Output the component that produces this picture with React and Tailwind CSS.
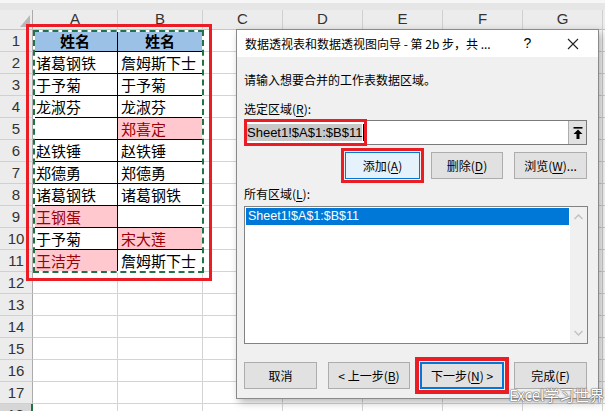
import React from 'react';

const cols = ['A', 'B', 'C', 'D', 'E', 'F', 'G', ''];
const colW = ['w-[85px]', 'w-[85px]', 'w-[80px]', 'w-[80px]', 'w-[80px]', 'w-[80px]', 'w-[80px]', 'w-[80px]'];

// [text, pink?]
const rows = [
  [['姓名'], ['姓名']],
  [['诸葛钢铁'], ['詹姆斯下士']],
  [['于予菊'], ['于予菊']],
  [['龙淑芬'], ['龙淑芬']],
  [[''], ['郑喜定', true]],
  [['赵铁锤'], ['赵铁锤']],
  [['郑德勇'], ['郑德勇']],
  [['诸葛钢铁'], ['诸葛钢铁']],
  [['王钢蛋', true], ['']],
  [['于予菊'], ['宋大莲', true]],
  [['王洁芳', true], ['詹姆斯下士']],
];

const cjk = "font-['Noto_Sans_CJK_SC',sans-serif]";
const ui = "font-['Microsoft_YaHei','Noto_Sans_CJK_SC',sans-serif]";

const U = ({ children }) => <span className="underline underline-offset-2">{children}</span>;

function SheetRow({ n, data }) {
  return (
    <div className="flex h-[22px] shrink-0">
      <div
        className={
          'w-[33px] shrink-0 flex items-center justify-center border-b border-r text-[15px] leading-none text-[#333] font-[\'Liberation_Sans\',sans-serif] ' +
          (n === 18 ? 'bg-[#d6d6d6] border-b-[#c6c6c6] border-r-2 border-r-[#217346]' : 'bg-[#ececec] border-b-[#d0d0d0] border-r-[#ababab]')
        }
      >
        {n}
      </div>
      {cols.map((c, i) => {
        const cell = data && i < 2 ? data[i] : null;
        if (!cell) {
          return <div key={i} className={colW[i] + ' shrink-0 border-r border-b border-[#d4d4d4]'} />;
        }
        const [text, pink] = cell;
        const head = n === 1;
        return (
          <div
            key={i}
            className={
              colW[i] +
              ' shrink-0 border-r border-b border-black flex items-center text-[15px] leading-none ' +
              cjk +
              (head ? ' bg-[#9bc2e6] justify-center font-bold text-black' : pink ? ' bg-[#ffc7ce] text-[#9c0006] pl-[3px]' : ' text-black pl-[3px]')
            }
          >
            {text}
          </div>
        );
      })}
    </div>
  );
}

function Btn({ w, children, kind }) {
  const base = 'h-[27px] shrink-0 flex items-center justify-center text-[12px] text-black ' + w;
  if (kind === 'focus') return <div className={base + ' bg-[#e5f1fb] border border-[#0078d7]'}>{children}</div>;
  if (kind === 'default') return <div className={base + ' bg-[#e1e1e1] border-2 border-[#0078d7]'}>{children}</div>;
  return <div className={base + ' bg-[#e1e1e1] border border-[#adadad]'}>{children}</div>;
}

export default function App() {
  return (
    <div className="relative w-[605px] h-[411px] overflow-hidden bg-white">
      {/* sheet */}
      <div className="flex flex-col">
        <div className="h-[10px] bg-[#e6e6e6] border-t-[3px] border-[#f6f6f6]" />
        <div className="flex h-[20px] bg-[#ececec] border-b border-[#c6c6c6]">
          <div className="w-[33px] shrink-0 border-r border-[#ababab] flex items-end justify-end pr-[2px] pb-[2px]">
            <svg width="10" height="12" viewBox="0 0 10 12">
              <polygon points="10,0 10,12 0,12" fill="#b8b8b8" />
            </svg>
          </div>
          {cols.map((c, i) => (
            <div
              key={i}
              className={colW[i] + " shrink-0 border-r border-[#d0d0d0] flex items-center justify-center text-[15px] text-[#333] font-['Liberation_Sans',sans-serif]"}
            >
              {c}
            </div>
          ))}
        </div>
        {Array.from({ length: 18 }, (_, k) => (
          <SheetRow key={k} n={k + 1} data={rows[k]} />
        ))}
      </div>

      {/* copy range marquee */}
      <div className="absolute left-[33px] top-[30px] w-[171px] h-[243px] border-2 border-white">
        <div className="absolute -inset-[2px] border-2 border-dashed border-[#217346]" />
      </div>
      {/* red highlight on range */}
      <div className="absolute left-[26px] top-[24px] w-[186px] h-[257px] border-[3px] border-[#ec1c24]" />

      {/* dialog */}
      <div className={'absolute left-[236px] top-[29px] w-[363px] h-[370px] border border-[#8a8a8a] bg-[#f0f0f0] shadow-[3px_3px_8px_rgba(0,0,0,0.3)] flex flex-col ' + ui}>
        <div className="h-[27px] shrink-0 bg-white flex items-center pl-[8px] text-[12px] text-black">
          <span className="whitespace-nowrap">数据透视表和数据透视图向导 - 第 2b 步，共 ...</span>
          <div className="ml-auto flex mr-[3px]">
            <div className="w-[45px] text-center text-[14px] font-['Liberation_Sans',sans-serif]">?</div>
            <div className="w-[45px] flex items-center justify-center">
              <svg width="12" height="12" viewBox="0 0 12 12">
                <path d="M1 1 L11 11 M11 1 L1 11" stroke="#222" strokeWidth="1.1" />
              </svg>
            </div>
          </div>
        </div>

        <div className="flex-1 flex flex-col pl-[7px] pr-[11px] pt-[14px] text-[12px] text-black">
          <div className="h-[17px] leading-[17px]">请输入想要合并的工作表数据区域。</div>
          <div className="h-[17px] leading-[17px] mt-[12px]">
            选定区域(<U>R</U>):
          </div>
          <div className="relative mt-[3px] h-[25px] bg-white border border-[#7a7a7a] flex items-center">
            <span className="ml-[2px] bg-[#c8c8c8] text-[13px] leading-[17px] font-['Liberation_Sans',sans-serif]">Sheet1!$A$1:$B$11</span>
            <span className="w-[1px] h-[17px] bg-black ml-[1px]" />
            <div className="ml-auto w-[18px] h-full bg-[#e1e1e1] border-l border-[#adadad] flex items-center justify-center">
              <svg width="10" height="12" viewBox="0 0 10 12">
                <rect x="0.5" y="0" width="9" height="1.6" fill="#000" />
                <polygon points="5,2.6 9.5,7 6.5,7 6.5,12 3.5,12 3.5,7 0.5,7" fill="#000" />
              </svg>
            </div>
            <div className="absolute -left-[1px] -top-[2px] w-[123px] h-[27px] border-[3px] border-[#ec1c24]" />
          </div>

          <div className="mt-[7px] flex justify-end gap-[11px]">
            <div className="relative">
              <Btn w="w-[75px]" kind="focus">
                添加(<U>A</U>)
              </Btn>
              <div className="absolute -inset-[4px] border-[3px] border-[#ec1c24]" />
            </div>
            <Btn w="w-[72px]">
              删除(<U>D</U>)
            </Btn>
            <Btn w="w-[73px]">
              浏览(<U>W</U>)...
            </Btn>
          </div>

          <div className="h-[17px] leading-[17px] mt-[6px]">
            所有区域(<U>L</U>):
          </div>
          <div className="mt-[4px] h-[138px] -mr-[1px] bg-white border border-[#828282] flex">
            <div className="flex-1 p-[1px]">
              <div className="h-[17px] bg-[#0078d7] text-white text-[12.5px] leading-[17px] pl-[2px] font-['Liberation_Sans',sans-serif]">
                Sheet1!$A$1:$B$11
              </div>
            </div>
            <div className="w-[17px] bg-[#f0f0f0] flex flex-col items-center justify-between py-[7px]">
              <svg width="9" height="6" viewBox="0 0 9 6">
                <path d="M0.5 5 L4.5 1 L8.5 5" fill="none" stroke="#c2c2c2" strokeWidth="1.5" />
              </svg>
              <svg width="9" height="6" viewBox="0 0 9 6">
                <path d="M0.5 1 L4.5 5 L8.5 1" fill="none" stroke="#c2c2c2" strokeWidth="1.5" />
              </svg>
            </div>
          </div>

          <div className="mt-[18px] flex">
            <Btn w="w-[73px]">取消</Btn>
            <div className="ml-[11px]">
              <Btn w="w-[82px]">
                &lt; 上一步(<U>B</U>)
              </Btn>
            </div>
            <div className="relative ml-[10px]">
              <Btn w="w-[84px]" kind="default">
                下一步(<U>N</U>) &gt;
              </Btn>
              <div className="absolute -inset-[5px] border-[4px] border-[#ec1c24]" />
            </div>
            <div className="ml-[10px]">
              <Btn w="w-[73px]">
                完成(<U>F</U>)
              </Btn>
            </div>
          </div>
        </div>
      </div>

      {/* watermark */}
      <div className={'absolute left-[509px] top-[386px] text-[15px] leading-[18px] text-white whitespace-nowrap [text-shadow:0_0_1px_#555,0_0_1px_#555,0_0_2px_#777] ' + cjk}>
        Excel学习世界
      </div>
    </div>
  );
}
